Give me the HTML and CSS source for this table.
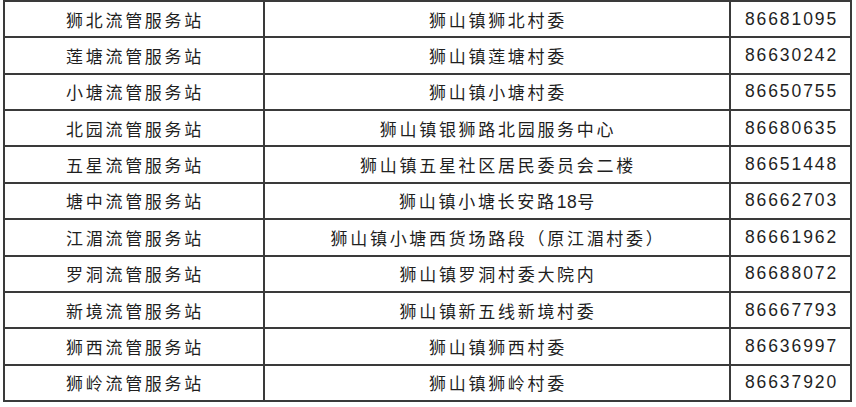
FILE: index.html
```html
<!DOCTYPE html>
<html lang="zh-CN">
<head>
<meta charset="utf-8">
<title>流管服务站</title>
<link rel="stylesheet" href="styles.css">
</head>
<body>
<table class="sheet">
  <colgroup>
    <col class="c-name">
    <col class="c-addr">
    <col class="c-tel">
  </colgroup>
  <tbody>
    <tr class="stub"><td></td><td></td><td></td></tr>
    <tr><td class="cjk">狮北流管服务站</td><td class="cjk">狮山镇狮北村委</td><td class="num">86681095</td></tr>
    <tr><td class="cjk">莲塘流管服务站</td><td class="cjk">狮山镇莲塘村委</td><td class="num">86630242</td></tr>
    <tr><td class="cjk">小塘流管服务站</td><td class="cjk">狮山镇小塘村委</td><td class="num">86650755</td></tr>
    <tr><td class="cjk">北园流管服务站</td><td class="cjk">狮山镇银狮路北园服务中心</td><td class="num">86680635</td></tr>
    <tr><td class="cjk">五星流管服务站</td><td class="cjk">狮山镇五星社区居民委员会二楼</td><td class="num">86651448</td></tr>
    <tr><td class="cjk">塘中流管服务站</td><td class="cjk">狮山镇小塘长安路<span class="lat">18</span>号</td><td class="num">86662703</td></tr>
    <tr><td class="cjk">江湄流管服务站</td><td class="cjk">狮山镇小塘西货场路段（原江湄村委）</td><td class="num">86661962</td></tr>
    <tr><td class="cjk">罗洞流管服务站</td><td class="cjk">狮山镇罗洞村委大院内</td><td class="num">86688072</td></tr>
    <tr><td class="cjk">新境流管服务站</td><td class="cjk">狮山镇新五线新境村委</td><td class="num">86667793</td></tr>
    <tr><td class="cjk">狮西流管服务站</td><td class="cjk">狮山镇狮西村委</td><td class="num">86636997</td></tr>
    <tr><td class="cjk">狮岭流管服务站</td><td class="cjk">狮山镇狮岭村委</td><td class="num">86637920</td></tr>
  </tbody>
</table>
</body>
</html>
```

FILE: styles.css
```css
html, body {
  margin: 0;
  padding: 0;
  background: #ffffff;
}

body {
  padding-left: 3px;
}

.sheet {
  border-collapse: collapse;
  table-layout: fixed;
  width: 849px;
  color: #1f1f1f;
}

.c-name { width: 260px; }
.c-addr { width: 466px; }
.c-tel { width: 121px; }

.sheet td {
  border: 2px solid #3a3a3a;
  height: 34.36px;
  padding: 0 0 0 2px;
  text-align: center;
  vertical-align: middle;
  white-space: nowrap;
}

.sheet tr.stub td {
  height: 0;
  border-top: none;
}

.cjk {
  font-family: "Noto Sans CJK SC", "Noto Sans", sans-serif;
  font-size: 17px;
  letter-spacing: 2.7px;
}

.lat {
  font-family: "Liberation Sans", Arial, sans-serif;
  font-size: 17.5px;
  letter-spacing: 0.5px;
}

.num {
  font-family: "Liberation Sans", Arial, sans-serif;
  font-size: 17.5px;
  letter-spacing: 1.9px;
}
```
